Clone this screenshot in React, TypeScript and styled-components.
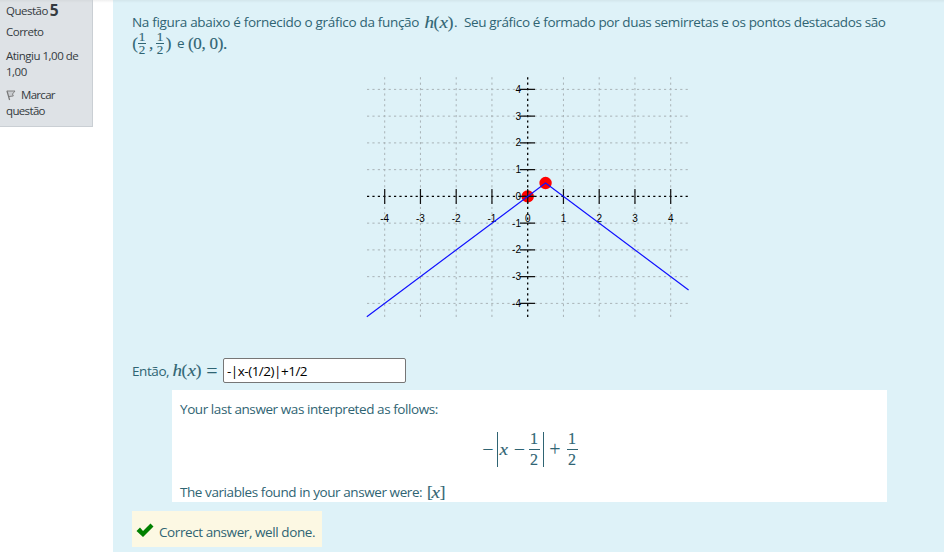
import React from "react";
import styled, { createGlobalStyle } from "styled-components";

const GlobalStyle = createGlobalStyle`
  * { box-sizing: border-box; }
  body {
    margin: 0;
    background: #fff;
    font-family: "Open Sans", "Noto Sans", sans-serif;
    overflow: hidden;
  }
`;

const Page = styled.div`
  display: flex;
  align-items: flex-start;
  width: 944px;
  height: 552px;
  overflow: hidden;
  background-image: linear-gradient(rgba(0, 0, 0, 0.06), rgba(0, 0, 0, 0));
  background-size: 100% 3px;
  background-repeat: no-repeat;
`;

const Info = styled.aside`
  width: 93px;
  height: 127px;
  padding-left: 6px;
  background: linear-gradient(rgba(0, 0, 0, 0.04), rgba(0, 0, 0, 0)) 0 0 / 100% 3px no-repeat #dee2e6;
  border: solid #cacfd4;
  border-width: 0 1px 1px 0;
  color: #343a40;
  font-size: 11.5px;
  line-height: 16px;
`;

const InfoLine = styled.div<{ $gap?: number; $track?: number }>`
  display: flex;
  align-items: center;
  height: 16px;
  margin-top: ${(p) => p.$gap ?? 0}px;
  letter-spacing: ${(p) => p.$track ?? -0.5}px;
  white-space: pre;
`;

const QuestionNumber = styled.b`
  font-size: 15.5px;
  margin: -3px 0 0 2px;
`;

const FlagIcon = styled.svg`
  width: 10px;
  height: 11px;
  margin-right: 5px;
`;

const Formulation = styled.main`
  width: 831px;
  height: 552px;
  margin-left: 20px;
  padding: 12px 57px 0 19px;
  background: linear-gradient(rgba(0, 0, 0, 0.05), rgba(0, 0, 0, 0)) 0 0 / 100% 3px no-repeat #def2f8;
  color: #2f6473;
  font-size: 13.5px;
`;

const Line = styled.div<{ $h: number }>`
  display: flex;
  align-items: center;
  height: ${(p) => p.$h}px;
  white-space: pre;
`;

const Text = styled.span<{ $w: number; $track?: number }>`
  flex: none;
  width: ${(p) => p.$w}px;
  letter-spacing: ${(p) => p.$track ?? -0.42}px;
  white-space: pre;
`;

const Math = styled.span<{ $w?: number; $track?: number }>`
  flex: none;
  display: inline-flex;
  align-items: center;
  width: ${(p) => (p.$w ? `${p.$w}px` : "auto")};
  font-family: "Liberation Serif", serif;
  font-size: 17px;
  letter-spacing: ${(p) => p.$track ?? 0}px;
  line-height: 1;
  -webkit-text-stroke: 0.15px currentColor;
  white-space: pre;
`;

const Variable = styled.i`
  display: inline-block;
  transform: scaleX(1.12);
  margin: 0 0.5px;
`;

const FractionBox = styled.span<{ $size: number; $row: number; $w: number }>`
  display: inline-flex;
  flex-direction: column;
  align-items: center;
  width: ${(p) => p.$w}px;
  font-size: ${(p) => p.$size}px;
  line-height: ${(p) => p.$row}px;
  letter-spacing: 0;
`;

const FractionBar = styled.span`
  width: 100%;
  height: 1px;
  background: currentColor;
`;

const Fraction = ({ size, row, w }: { size: number; row: number; w: number }) => (
  <FractionBox $size={size} $row={row} $w={w}>
    <span>1</span>
    <FractionBar />
    <span>2</span>
  </FractionBox>
);

const Plot = styled.svg`
  display: block;
  width: 340px;
  height: 260px;
  margin: 16px 0 0 228px;
  font-family: "Liberation Sans", Arial, sans-serif;
  font-size: 10px;
`;

const AnswerRow = styled(Line)`
  margin-top: 28px;
`;

const AnswerInput = styled.input`
  width: 183px;
  height: 25px;
  padding: 0 3px;
  border: 1px solid #767676;
  border-radius: 2px;
  background: #fff;
  color: #000;
  font-family: "Open Sans", sans-serif;
  font-size: 13.5px;
  letter-spacing: -0.5px;
`;

const Validation = styled.section`
  width: 715px;
  height: 112px;
  margin: 7px 0 0 40px;
  padding: 9px 8px 0;
  background: #fff;
`;

const Display = styled.div`
  display: flex;
  justify-content: center;
  align-items: center;
  height: 60px;
  padding-right: 2px;
`;

const Term = styled.span<{ $w: number }>`
  width: ${(p) => p.$w}px;
  text-align: center;
`;

const Sign = styled(Term)`
  font-size: 20px;
  -webkit-text-stroke: 0;
`;

const AbsBar = styled.span`
  width: 1px;
  height: 35px;
  background: currentColor;
`;

const Feedback = styled.div`
  display: flex;
  align-items: center;
  width: 190px;
  height: 36px;
  margin-top: 9px;
  padding: 5px 0 0 4px;
  background: #fcf8e3;
`;

const CheckIcon = styled.svg`
  width: 18px;
  height: 15px;
  margin: -3px 5px 0 0;
`;

const TICKS = [-4, -3, -2, -1, 0, 1, 2, 3, 4];
const px = (x: number) => 167.7 + x * 35.75;
const py = (y: number) => 126.4 - y * 26.75;

const Graph = () => (
  <Plot viewBox="0 0 340 260">
    {TICKS.filter((t) => t !== 0).map((t) => (
      <g key={t} stroke="#a9b3b7" strokeWidth="1" strokeDasharray="2.2 3.2">
        <path d={`M${px(t)} 247V7`} />
        <path d={`M7 ${py(t)}H329`} />
      </g>
    ))}
    <circle cx={px(0)} cy={py(0)} r="6.2" fill="#f00" />
    <circle cx={px(0.5)} cy={py(0.5)} r="6.2" fill="#f00" />
    <g stroke="#000" strokeWidth="1.3" strokeDasharray="2.2 3.2">
      <path d={`M7 ${py(0)}H329`} />
      <path d={`M${px(0)} 247V7`} />
    </g>
    {TICKS.map((t) => (
      <g key={t}>
        <path d={`M${px(t)} 119V134M160 ${py(t)}H175`} stroke="#111" strokeWidth="1.2" />
        <text x={px(t)} y="152" textAnchor="middle">{t}</text>
        <text x="161" y={py(t) + 3.4} textAnchor="end">{t}</text>
      </g>
    ))}
    <path
      d={`M${px(-4.5)} ${py(-4.5)}L${px(0.5)} ${py(0.5)}L${px(4.5)} ${py(-3.5)}`}
      fill="none"
      stroke="#11f"
      strokeWidth="1.2"
    />
  </Plot>
);

export default function App() {
  return (
    <>
      <GlobalStyle />
      <Page>
        <Info>
          <InfoLine $gap={3} $track={-0.5}>
            Questão<QuestionNumber>5</QuestionNumber>
          </InfoLine>
          <InfoLine $gap={5}>Correto</InfoLine>
          <InfoLine $gap={8}>Atingiu 1,00 de</InfoLine>
          <InfoLine>1,00</InfoLine>
          <InfoLine $gap={7} $track={-0.7}>
            <FlagIcon viewBox="0 0 10 11">
              <path d="M0.8 1H9L6.5 4L7.3 6L3 6.5" fill="#c9ccd0" stroke="#777" strokeWidth="0.9" />
              <path d="M1 1L3.6 10" stroke="#777" strokeWidth="1.2" />
            </FlagIcon>
            Marcar
          </InfoLine>
          <InfoLine $track={-0.65}>questão</InfoLine>
        </Info>
        <Formulation>
          <Line $h={20}>
            <Text $w={292} $track={-0.31}>Na figura abaixo é fornecido o gráfico da função</Text>
            <Math $w={30}><Variable>h</Variable>(<Variable>x</Variable>)</Math>
            <Text $w={10}>.</Text>
            <Text $w={430} $track={-0.36}>Seu gráfico é formado por duas semirretas e os pontos destacados são</Text>
          </Line>
          <Line $h={22}>
            <Math $w={45}>
              <Term $w={6}>(</Term>
              <Fraction size={13} row={12} w={8} />
              <Term $w={10}>,</Term>
              <Fraction size={13} row={12} w={8} />
              <Term $w={9}>)</Term>
            </Math>
            <Text $w={11}>e</Text>
            <Math $track={-0.3}>(0, 0).</Math>
          </Line>
          <Graph />
          <AnswerRow $h={25}>
            <Text $w={40}>Então,</Text>
            <Math $w={51}>
              <Variable>h</Variable>(<Variable>x</Variable>)<Sign $w={21}>=</Sign>
            </Math>
            <AnswerInput defaultValue="-|x-(1/2)|+1/2" />
          </AnswerRow>
          <Validation>
            <Line $h={20}><Text $w={260}>Your last answer was interpreted as follows:</Text></Line>
            <Display>
              <Math>
                <Sign $w={17}>−</Sign>
                <AbsBar />
                <Term $w={13}><Variable>x</Variable></Term>
                <Sign $w={18}>−</Sign>
                <Fraction size={16} row={20} w={11} />
                <Term $w={3} />
                <AbsBar />
                <Sign $w={23}>+</Sign>
                <Fraction size={16} row={20} w={11} />
              </Math>
            </Display>
            <Line $h={26}>
              <Text $w={247}>The variables found in your answer were:</Text>
              <Math $track={-0.8}>[<Variable>x</Variable>]</Math>
            </Line>
          </Validation>
          <Feedback>
            <CheckIcon viewBox="0 0 18 15">
              <path d="M0.5 8L4 4.5L7 8L14.5 0.5L17.5 3.5L7 14Z" fill="#008000" />
            </CheckIcon>
            <Text $w={158}>Correct answer, well done.</Text>
          </Feedback>
        </Formulation>
      </Page>
    </>
  );
}
